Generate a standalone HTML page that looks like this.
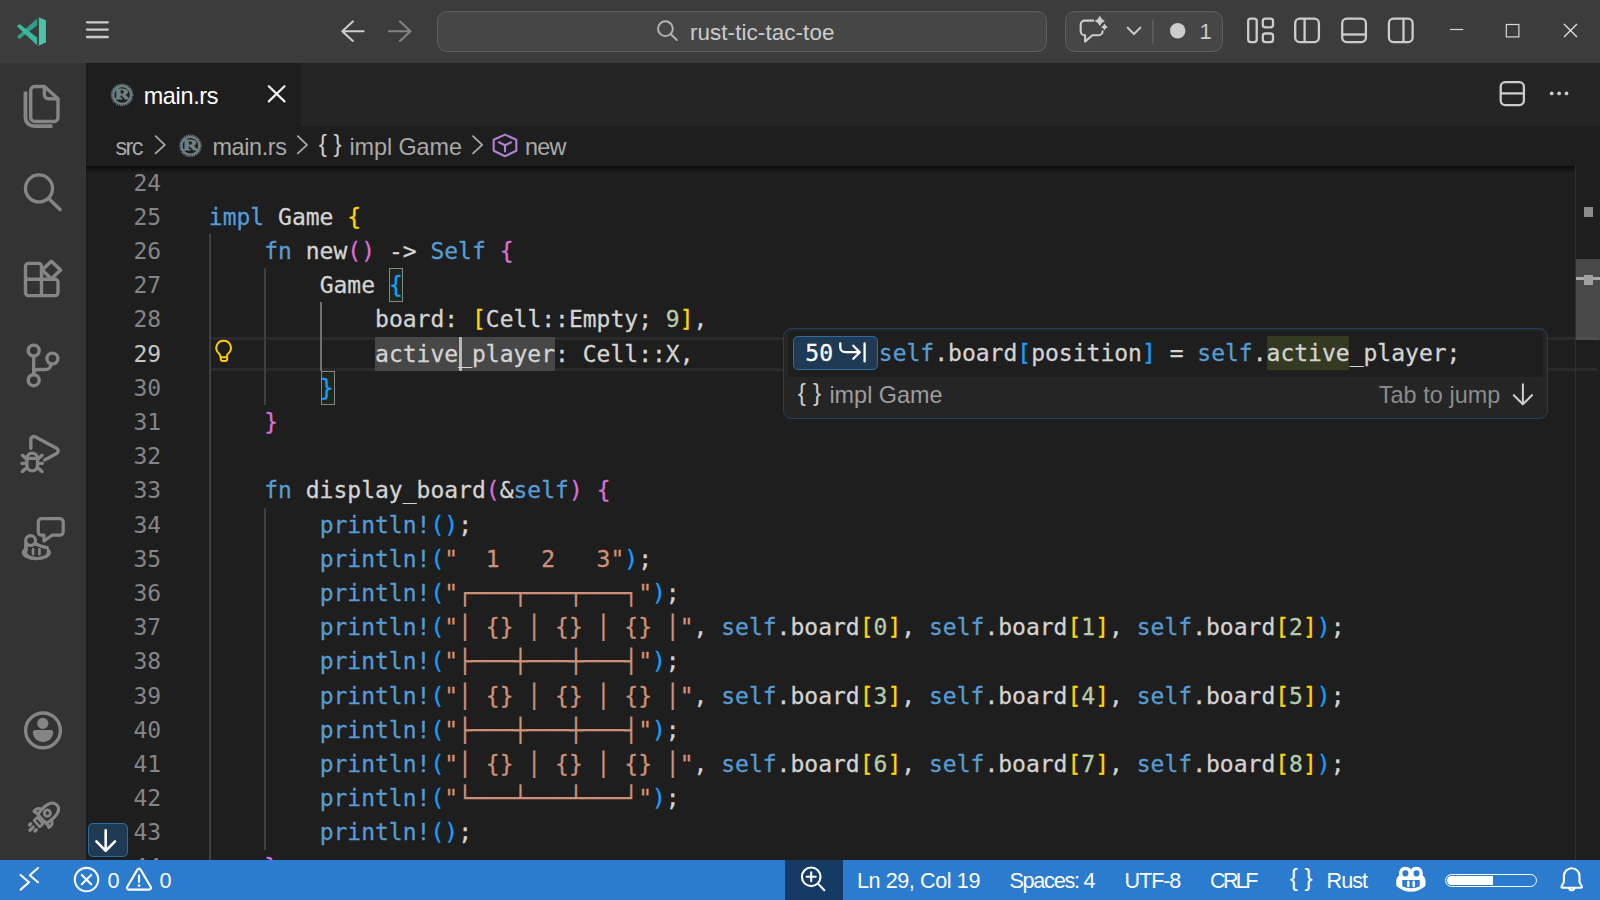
<!DOCTYPE html>
<html lang="en"><head><meta charset="utf-8"><title>main.rs - rust-tic-tac-toe - Visual Studio Code - Insiders</title>
<style>
*{box-sizing:border-box}
html,body{margin:0;padding:0;width:1600px;height:900px;overflow:hidden;background:#1e1e1e}
body{position:relative;font-family:"Liberation Sans", sans-serif;color:#ccc}
.abs,.t,.ln,.cl,.g{position:absolute}
.t{white-space:pre;line-height:1;}
#title{left:0;top:0;width:1600px;height:63px;background:#3c3c3c}
#act{left:0;top:63px;width:86px;height:797px;background:#333}
#tabs{left:86px;top:63px;width:1514px;height:63px;background:#252526}
#tab{left:86px;top:63px;width:215px;height:63px;background:#1e1e1e}
#bc{left:86px;top:126px;width:1514px;height:40px;background:#1e1e1e}
#ed{left:86px;top:166px;width:1514px;height:694px;background:#1e1e1e;overflow:hidden}
#shadow{left:86px;top:166px;width:1490px;height:7px;background:linear-gradient(rgba(0,0,0,.62),rgba(0,0,0,0))}
#status{left:0;top:860px;width:1600px;height:40px;background:#2b7bce}
.ln,.cl{font-family:"DejaVu Sans Mono", "Liberation Mono", monospace;font-size:23.013px;line-height:34.2px;height:34.2px;white-space:pre;}
.ln{left:100px;width:61.2px;text-align:right;color:#858585}
.cl{left:208.8px;color:#d4d4d4;-webkit-text-stroke:0.28px}
.kw{color:#569cd6}.tx{color:#d4d4d4}.b1{color:#ffd700}.b2{color:#da70d6}.b3{color:#179fff}.st{color:#ce9178}.nu{color:#b5cea8}
.g{width:2px;background:#404040}
.bm{outline:1px solid #888;outline-offset:-1px;background:#1d281d}
svg{position:absolute;left:0;top:0;overflow:visible}
</style></head><body>

<div id="title" class="abs"></div><div id="act" class="abs"></div><div id="tabs" class="abs"></div><div id="tab" class="abs"></div><div id="bc" class="abs"></div><div id="ed" class="abs"></div>
<div class="abs" style="left:208.8px;top:336.9px;width:1388.2px;height:2.7px;background:#2a2a2a"></div>
<div class="abs" style="left:208.8px;top:368.2px;width:1388.2px;height:2.7px;background:#2a2a2a"></div>
<div class="abs" style="left:375.1px;top:336.9px;width:180.1px;height:34px;background:#474747"></div>
<div class="g" style="left:209px;top:234.0px;height:649.8px;background:#404040"></div>
<div class="g" style="left:264px;top:268.2px;height:136.8px;background:#404040"></div>
<div class="g" style="left:320px;top:302.4px;height:68.4px;background:#707070"></div>
<div class="g" style="left:264px;top:507.6px;height:342.0px;background:#404040"></div>
<div class="abs bm" style="left:388.9px;top:268.1px;width:14.4px;height:34px"></div>
<div class="abs bm" style="left:320.7px;top:370.9px;width:14.3px;height:34px"></div>
<div class="abs" style="left:459px;top:336.9px;width:3.1px;height:34px;background:#b8b8b8"></div>
<div class="ln" style="top:165.6px;color:#858585">24</div>
<div class="ln" style="top:199.8px;color:#858585">25</div>
<div class="cl" style="top:199.8px;left:208.80px"><span class="kw">impl</span><span class="tx"> Game </span><span class="b1">{</span></div>
<div class="ln" style="top:234.0px;color:#858585">26</div>
<div class="cl" style="top:234.0px;left:264.22px"><span class="kw">fn</span><span class="tx"> new</span><span class="b2">(</span><span class="b2">)</span><span class="tx"> -&gt; </span><span class="kw">Self</span><span class="tx"> </span><span class="b2">{</span></div>
<div class="ln" style="top:268.2px;color:#858585">27</div>
<div class="cl" style="top:268.2px;left:319.64px"><span class="tx">Game </span><span class="b3">{</span></div>
<div class="ln" style="top:302.4px;color:#858585">28</div>
<div class="cl" style="top:302.4px;left:375.06px"><span class="tx">board: </span><span class="b1">[</span><span class="tx">Cell::Empty; </span><span class="nu">9</span><span class="b1">]</span><span class="tx">,</span></div>
<div class="ln" style="top:336.6px;color:#c6c6c6">29</div>
<div class="cl" style="top:336.6px;left:375.06px"><span class="tx">active_player: Cell::X,</span></div>
<div class="ln" style="top:370.8px;color:#858585">30</div>
<div class="cl" style="top:370.8px;left:319.64px"><span class="b3">}</span></div>
<div class="ln" style="top:405.0px;color:#858585">31</div>
<div class="cl" style="top:405.0px;left:264.22px"><span class="b2">}</span></div>
<div class="ln" style="top:439.2px;color:#858585">32</div>
<div class="ln" style="top:473.4px;color:#858585">33</div>
<div class="cl" style="top:473.4px;left:264.22px"><span class="kw">fn</span><span class="tx"> display_board</span><span class="b2">(</span><span class="tx">&amp;</span><span class="kw">self</span><span class="b2">)</span><span class="tx"> </span><span class="b2">{</span></div>
<div class="ln" style="top:507.6px;color:#858585">34</div>
<div class="cl" style="top:507.6px;left:319.64px"><span class="kw">println!</span><span class="b3">(</span><span class="b3">)</span><span class="tx">;</span></div>
<div class="ln" style="top:541.8px;color:#858585">35</div>
<div class="cl" style="top:541.8px;left:319.64px"><span class="kw">println!</span><span class="b3">(</span><span class="st">&quot;  1   2   3&quot;</span><span class="b3">)</span><span class="tx">;</span></div>
<div class="ln" style="top:576.0px;color:#858585">36</div>
<div class="cl" style="top:576.0px;left:319.64px"><span class="kw">println!</span><span class="b3">(</span><span class="st">&quot;┌───┬───┬───┐&quot;</span><span class="b3">)</span><span class="tx">;</span></div>
<div class="ln" style="top:610.2px;color:#858585">37</div>
<div class="cl" style="top:610.2px;left:319.64px"><span class="kw">println!</span><span class="b3">(</span><span class="st">&quot;│ {} │ {} │ {} │&quot;</span><span class="tx">, </span><span class="kw">self</span><span class="tx">.board</span><span class="b1">[</span><span class="nu">0</span><span class="b1">]</span><span class="tx">, </span><span class="kw">self</span><span class="tx">.board</span><span class="b1">[</span><span class="nu">1</span><span class="b1">]</span><span class="tx">, </span><span class="kw">self</span><span class="tx">.board</span><span class="b1">[</span><span class="nu">2</span><span class="b1">]</span><span class="b3">)</span><span class="tx">;</span></div>
<div class="ln" style="top:644.4px;color:#858585">38</div>
<div class="cl" style="top:644.4px;left:319.64px"><span class="kw">println!</span><span class="b3">(</span><span class="st">&quot;├───┼───┼───┤&quot;</span><span class="b3">)</span><span class="tx">;</span></div>
<div class="ln" style="top:678.6px;color:#858585">39</div>
<div class="cl" style="top:678.6px;left:319.64px"><span class="kw">println!</span><span class="b3">(</span><span class="st">&quot;│ {} │ {} │ {} │&quot;</span><span class="tx">, </span><span class="kw">self</span><span class="tx">.board</span><span class="b1">[</span><span class="nu">3</span><span class="b1">]</span><span class="tx">, </span><span class="kw">self</span><span class="tx">.board</span><span class="b1">[</span><span class="nu">4</span><span class="b1">]</span><span class="tx">, </span><span class="kw">self</span><span class="tx">.board</span><span class="b1">[</span><span class="nu">5</span><span class="b1">]</span><span class="b3">)</span><span class="tx">;</span></div>
<div class="ln" style="top:712.8px;color:#858585">40</div>
<div class="cl" style="top:712.8px;left:319.64px"><span class="kw">println!</span><span class="b3">(</span><span class="st">&quot;├───┼───┼───┤&quot;</span><span class="b3">)</span><span class="tx">;</span></div>
<div class="ln" style="top:747.0px;color:#858585">41</div>
<div class="cl" style="top:747.0px;left:319.64px"><span class="kw">println!</span><span class="b3">(</span><span class="st">&quot;│ {} │ {} │ {} │&quot;</span><span class="tx">, </span><span class="kw">self</span><span class="tx">.board</span><span class="b1">[</span><span class="nu">6</span><span class="b1">]</span><span class="tx">, </span><span class="kw">self</span><span class="tx">.board</span><span class="b1">[</span><span class="nu">7</span><span class="b1">]</span><span class="tx">, </span><span class="kw">self</span><span class="tx">.board</span><span class="b1">[</span><span class="nu">8</span><span class="b1">]</span><span class="b3">)</span><span class="tx">;</span></div>
<div class="ln" style="top:781.2px;color:#858585">42</div>
<div class="cl" style="top:781.2px;left:319.64px"><span class="kw">println!</span><span class="b3">(</span><span class="st">&quot;└───┴───┴───┘&quot;</span><span class="b3">)</span><span class="tx">;</span></div>
<div class="ln" style="top:815.4px;color:#858585">43</div>
<div class="cl" style="top:815.4px;left:319.64px"><span class="kw">println!</span><span class="b3">(</span><span class="b3">)</span><span class="tx">;</span></div>
<div class="ln" style="top:849.6px;color:#858585">44</div>
<div class="cl" style="top:849.6px;left:264.22px"><span class="b2">}</span></div>
<div id="shadow" class="abs"></div>
<div id="status" class="abs"></div>
<div class="abs" style="left:437px;top:11px;width:610px;height:41px;border-radius:10px;background:#464646;border:1.5px solid #5f5f5f"></div>
<div class="abs" style="left:1065px;top:11px;width:157.5px;height:41px;border-radius:10px;background:#464646;border:1.5px solid #5f5f5f"></div>
<div class="abs" style="left:1575px;top:166px;width:1.4px;height:694px;background:#303030"></div>
<div class="abs" style="left:1576px;top:259px;width:24px;height:81px;background:rgba(135,135,135,.4)"></div>
<div class="abs" style="left:1576px;top:277.200px;width:24px;height:2.800px;background:#a8a8a8"></div>
<div class="abs" style="left:1584px;top:207px;width:8.500px;height:10px;background:#8c8c8c"></div>
<div class="abs" style="left:1584px;top:275.200px;width:8.500px;height:10px;background:#a0a0a0"></div>
<div class="abs" style="left:783px;top:328px;width:765px;height:90.500px;border-radius:8.500px;background:#252526;border:1.300px solid #1f4265"></div>
<div class="abs" style="left:788px;top:331.200px;width:755.200px;height:45.400px;background:#1e1e1e;border-radius:4px 4px 0 0"></div>
<div class="abs" style="left:793px;top:336px;width:84.800px;height:34px;border-radius:4.800px;background:#1e3a54;border:1.300px solid #2e6ba3"></div>
<div class="abs" style="left:1266.700px;top:336px;width:82.600px;height:34px;background:#343a22"></div>
<div class="abs" style="left:88px;top:823px;width:40px;height:33.800px;border-radius:5px;background:#1e3a54;border:1.300px solid #2e6ba3"></div>
<div class="abs" style="left:785px;top:860px;width:58px;height:40px;background:#153b64"></div>
<div class="abs" style="left:1445px;top:873.800px;width:92px;height:13px;border-radius:7px;border:1.300px solid #fff"></div>
<div class="abs" style="left:1447.200px;top:875.900px;width:45.800px;height:8.800px;border-radius:4.400px 0 0 4.400px;background:#fff"></div>
<div class="cl" style="top:336.1px;left:878.8px"><span class="kw">self</span><span class="tx">.board</span><span class="b3">[</span><span class="tx">position</span><span class="b3">]</span><span class="tx"> = </span><span class="kw">self</span><span class="tx">.active_player;</span></div>
<div class="cl" style="top:336.1px;left:805.3px;color:#fff">50</div>
<svg width="1600" height="900" viewBox="0 0 1600 900"><polygon points="16.900,36.750 37.100,18.600 37.100,25.600 19.500,39.100" fill="#319f87"/><polygon points="19.500,23.900 37.100,37.600 37.100,45.200 16.900,26.300" fill="#3db89e"/><polygon points="37.600,17.100 39,17.600 45.900,20.300 45.900,42.400 39,45.500 37.600,45.900 38.900,44.800 38.900,18.100" fill="#4ec2a9"/>
<path d="M87 22.3H107.8" stroke="#ccc" stroke-width="2.3" stroke-linecap="round"/>
<path d="M87 29.6H107.8" stroke="#ccc" stroke-width="2.3" stroke-linecap="round"/>
<path d="M87 37.0H107.8" stroke="#ccc" stroke-width="2.3" stroke-linecap="round"/>
<path d="M363.6 31.2H342.5M352.8 21.4L342.3 31.2L352.8 41" fill="none" stroke="#ccc" stroke-width="2.1" stroke-linecap="round" stroke-linejoin="round"/>
<path d="M389 31.2H410M400 21.4L410.5 31.2L400 41" fill="none" stroke="#848484" stroke-width="2.1" stroke-linecap="round" stroke-linejoin="round"/>
<circle cx="665.4" cy="28.7" r="7.4" fill="none" stroke="#b4b4b4" stroke-width="1.9"/><path d="M670.8 34.2L676.8 40" stroke="#b4b4b4" stroke-width="1.9" stroke-linecap="round"/>
<path d="M1093.300 20.600H1084.700a4 4 0 0 0-4 4V31.300a4 4 0 0 0 4 4h.400v6.300l7.200-6.300H1098.600a4 4 0 0 0 4-4V31.600" fill="none" stroke="#ccc" stroke-width="2.100" stroke-linecap="round" stroke-linejoin="round"/>
<path d="M1099.8 15.80Q1101.23 19.47 1104.90 20.9Q1101.23 22.33 1099.8 26.00Q1098.37 22.33 1094.70 20.9Q1098.37 19.47 1099.8 15.80z" fill="#ccc"/>
<path d="M1104.5 23.60Q1105.48 26.12 1108.00 27.1Q1105.48 28.08 1104.5 30.60Q1103.52 28.08 1101.00 27.1Q1103.52 26.12 1104.5 23.60z" fill="#ccc"/>
<path d="M1127.6 27.600L1134 34L1140.400 27.600" fill="none" stroke="#ccc" stroke-width="2" stroke-linecap="round" stroke-linejoin="round"/>
<path d="M1153 19.500V43.500" stroke="#5f5f5f" stroke-width="1.6"/>
<circle cx="1177.700" cy="30.800" r="7.700" fill="#ccc"/>
<rect x="1248.200" y="18.700" width="8.500" height="23.400" rx="2.500" fill="none" stroke="#ccc" stroke-width="2.3"/>
<rect x="1262.800" y="18.700" width="10.200" height="8.600" rx="2.500" fill="none" stroke="#ccc" stroke-width="2.3"/>
<rect x="1262.800" y="33.500" width="10.200" height="8.600" rx="2.500" fill="none" stroke="#ccc" stroke-width="2.3"/>
<rect x="1295.200" y="18.700" width="23.700" height="23.400" rx="4.500" fill="none" stroke="#ccc" stroke-width="2.3"/><path d="M1304.600 18.700V42" fill="none" stroke="#ccc" stroke-width="2.3"/>
<rect x="1342.200" y="18.700" width="23.700" height="23.400" rx="4.500" fill="none" stroke="#ccc" stroke-width="2.3"/><path d="M1342.200 34.500H1366" fill="none" stroke="#ccc" stroke-width="2.3"/>
<rect x="1388.900" y="18.700" width="23.700" height="23.400" rx="4.500" fill="none" stroke="#ccc" stroke-width="2.3"/><path d="M1403.500 18.700V42" fill="none" stroke="#ccc" stroke-width="2.3"/>
<path d="M1450 29.500H1463.300" stroke="#d8d8d8" stroke-width="1.200"/>
<rect x="1506.300" y="24.500" width="12.600" height="12.400" fill="none" stroke="#d8d8d8" stroke-width="1.200"/>
<path d="M1564 24L1577 37M1577 24L1564 37" stroke="#e4e4e4" stroke-width="1.300"/>
<g><circle cx="122.1" cy="94.9" r="10.500" fill="none" stroke="#6d8086" stroke-width="1.700" stroke-dasharray="1.050 0.890"/><circle cx="122.1" cy="94.9" r="8.900" fill="none" stroke="#6d8086" stroke-width="2.300"/><text x="114.80" y="99.00" textLength="14.800" lengthAdjust="spacingAndGlyphs" font-family="Liberation Serif, serif" font-weight="bold" font-size="14.500" fill="#6d8086" stroke="#6d8086" stroke-width="0.800">R</text></g>
<path d="M268.800 86.200L284.500 101.400M284.500 86.200L268.800 101.400" stroke="#f0f0f0" stroke-width="2.200" stroke-linecap="round"/>
<rect x="1500.700" y="82.200" width="23.200" height="22.900" rx="4.500" fill="none" stroke="#ccc" stroke-width="2.300"/><path d="M1500.700 93.400H1524" stroke="#ccc" stroke-width="2.300"/>
<circle cx="1551.7" cy="93.400" r="1.900" fill="#ccc"/>
<circle cx="1559.1" cy="93.400" r="1.900" fill="#ccc"/>
<circle cx="1566.5" cy="93.400" r="1.900" fill="#ccc"/>
<path d="M155.6 136.200L164.79999999999998 144.800L155.6 153.400" fill="none" stroke="#a9a9a9" stroke-width="1.800" stroke-linecap="round" stroke-linejoin="round"/>
<g><circle cx="190.4" cy="145.8" r="10.500" fill="none" stroke="#6d8086" stroke-width="1.700" stroke-dasharray="1.050 0.890"/><circle cx="190.4" cy="145.8" r="8.900" fill="none" stroke="#6d8086" stroke-width="2.300"/><text x="183.10" y="149.90" textLength="14.800" lengthAdjust="spacingAndGlyphs" font-family="Liberation Serif, serif" font-weight="bold" font-size="14.500" fill="#6d8086" stroke="#6d8086" stroke-width="0.800">R</text></g>
<path d="M297.8 136.200L307.0 144.800L297.8 153.400" fill="none" stroke="#a9a9a9" stroke-width="1.800" stroke-linecap="round" stroke-linejoin="round"/>
<path d="M473 136.200L482.2 144.800L473 153.400" fill="none" stroke="#a9a9a9" stroke-width="1.800" stroke-linecap="round" stroke-linejoin="round"/>
<path d="M505 134.600L516.300 139.800V150.800L505 156.200L493.700 150.800V139.800ZM499 142.300L505 145.300L511 142.300M505 145.300V151.500" fill="none" stroke="#b180d7" stroke-width="2.100" stroke-linejoin="round" stroke-linecap="round"/>
<path d="M223.600 340.700a7.200 7.200 0 0 0-4.700 12.700c1 .9 1.500 1.900 1.500 3v.800h6.400v-.800c0-1.100.5-2.100 1.500-3a7.200 7.200 0 0 0-4.700-12.700zM220.800 357.200v2a1.800 1.800 0 0 0 1.800 1.800h2.800a1.800 1.800 0 0 0 1.800-1.800v-2" fill="none" stroke="#ffcc00" stroke-width="2" stroke-linejoin="round"/>
<path d="M840.300 343.300v3.900a5 5 0 0 0 5 5h14M853.300 345.700l6.500 6.500l-6.500 6.500M864.600 343.400v18" fill="none" stroke="#fff" stroke-width="2.300" stroke-linecap="round" stroke-linejoin="round"/>
<path d="M1522.900 384.200V404M1513.800 395.200L1522.900 404.300L1532 395.200" fill="none" stroke="#ccc" stroke-width="2.100" stroke-linecap="round" stroke-linejoin="round"/>
<path d="M105.700 830.200V850.600M96.400 841.400L105.700 850.900L115 841.400" fill="none" stroke="#fff" stroke-width="2.600" stroke-linecap="round" stroke-linejoin="round"/>
<path d="M44.400 86.500H34.700a4 4 0 0 0-4 4v27a4 4 0 0 0 4 4H54a4 4 0 0 0 4-4V98.800zL58 98.800M44.400 86.500V94.800a4 4 0 0 0 4 4H58" fill="none" stroke="#858585" stroke-width="3.400" stroke-linecap="round" stroke-linejoin="round"/>
<path d="M25.500 91.500V117.500a8.600 8.600 0 0 0 8.600 8.600H52.500" fill="none" stroke="#858585" stroke-width="3.900" stroke-linecap="butt" stroke-linejoin="round"/>
<circle cx="39" cy="188.400" r="13.500" fill="none" stroke="#858585" stroke-width="3.400" stroke-linecap="round" stroke-linejoin="round"/><path d="M49 198.700L60 209.500" fill="none" stroke="#858585" stroke-width="3.400" stroke-linecap="round" stroke-linejoin="round"/>
<path d="M41.500 279.200V266.400a3 3 0 0 0-3-3H28.500a3 3 0 0 0-3 3V292.600a3 3 0 0 0 3 3H55a3 3 0 0 0 3-3V282.200a3 3 0 0 0-3-3H25.500M41.500 279.200V295.600" fill="none" stroke="#858585" stroke-width="3.400" stroke-linecap="round" stroke-linejoin="round"/>
<path d="M51.400 261.200l9.200 8.800l-9.200 8.800l-9.200-8.800z" fill="none" stroke="#858585" stroke-width="3.400" stroke-linecap="round" stroke-linejoin="round"/>
<circle cx="33.700" cy="350.600" r="5.500" fill="none" stroke="#858585" stroke-width="3.400" stroke-linecap="round" stroke-linejoin="round"/><circle cx="52.400" cy="358.600" r="5.500" fill="none" stroke="#858585" stroke-width="3.400" stroke-linecap="round" stroke-linejoin="round"/><circle cx="33.700" cy="380.200" r="5.500" fill="none" stroke="#858585" stroke-width="3.400" stroke-linecap="round" stroke-linejoin="round"/>
<path d="M33.700 356.200V374.500M33.700 373.500a4 4 0 0 1 4-4H45.500a5.500 5.500 0 0 0 5.500-5.300" fill="none" stroke="#858585" stroke-width="3.400" stroke-linecap="round" stroke-linejoin="round"/>
<path d="M30.800 448.300V439.500a3 3 0 0 1 4.300-2.700L56.600 448.200a3 3 0 0 1 0 5.300L44.600 460" fill="none" stroke="#858585" stroke-width="3.400" stroke-linecap="round" stroke-linejoin="round"/>
<path d="M26.900 458.400a5.300 5.300 0 0 1 10.600 0V465.600a5.300 5.300 0 0 1-10.600 0zM26.900 458.300H37.500M22.400 455.300L26.200 458.800M42 455.300L38.200 458.800M21.900 463.300H26.500M42.500 463.300H38M22.400 471.600L26.500 468M42 471.600L38 468" fill="none" stroke="#858585" stroke-width="3.300" stroke-linecap="round" stroke-linejoin="round"/>
<path d="M41.500 518.600H60a3.200 3.200 0 0 1 3.200 3.200V532a3.200 3.200 0 0 1-3.200 3.200H52L44 541V535.200H41.500A3.200 3.200 0 0 1 38.300 532V521.800A3.200 3.200 0 0 1 41.500 518.600z" fill="none" stroke="#858585" stroke-width="3.200" stroke-linecap="round" stroke-linejoin="round"/>
<ellipse cx="36.300" cy="552.600" rx="14.600" ry="7.700" fill="#858585"/>
<path d="M27.300 545.500H46.800V553a9.800 4.400 0 0 1-19.500 0z" fill="#333"/>
<path d="M24.100 541.500V551H27.800V545z" fill="#858585"/>
<path d="M34 541.500C37 546.500 43 546.200 48.500 548.200" fill="none" stroke="#858585" stroke-width="3.400"/>
<circle cx="30.600" cy="540.600" r="4.900" fill="#333" stroke="#858585" stroke-width="3.200"/>
<path d="M33.100 549.400V554.200M39.400 549.400V554.200" stroke="#858585" stroke-width="2.700" stroke-linecap="round"/>
<circle cx="43" cy="730.400" r="17.400" fill="none" stroke="#858585" stroke-width="3.400" stroke-linecap="round" stroke-linejoin="round"/><circle cx="42.800" cy="723.400" r="5.600" fill="#858585"/>
<path d="M35 730H51a2.200 2.200 0 0 1 2.200 2.200a10.200 10 0 0 1-20.400 0A2.200 2.200 0 0 1 35 730z" fill="#858585"/>
<g transform="translate(49.500,811.900) rotate(47)"><path d="M-6 10.300C-7.600 5 -8.200 -4 -4.500 -8.300C-2.500 -10.700 2.500 -10.700 4.500 -8.300C8.200 -4 7.600 5 6 10.300z" fill="none" stroke="#858585" stroke-width="3.100" stroke-linecap="round" stroke-linejoin="round"/><circle cx="-0.600" cy="2.400" r="3.100" fill="none" stroke="#858585" stroke-width="2.900"/><path d="M-7.200 4C-10.500 5 -11.800 8 -11 11L-6.500 9.800M7.200 4C10.500 5 11.800 8 11 11L6.500 9.800" fill="none" stroke="#858585" stroke-width="3.100" stroke-linecap="round" stroke-linejoin="round"/><rect x="-4.300" y="12.800" width="8.600" height="4.400" fill="none" stroke="#858585" stroke-width="2.600" stroke-linejoin="round"/><path d="M-4.100 21.800V23.600M0 22.300V26.800M4.100 21.800V23.600" fill="none" stroke="#858585" stroke-width="3.300" stroke-linecap="round"/></g>
<path d="M20.600 875L29 882.300L20.600 889.600M38 868L29.800 875.200L38 882.300" fill="none" stroke="#ffffff" stroke-width="2.100" stroke-linecap="round" stroke-linejoin="round"/>
<circle cx="86.500" cy="879.600" r="11.700" fill="none" stroke="#ffffff" stroke-width="2.100" stroke-linecap="round" stroke-linejoin="round"/><path d="M81.800 874.900L91.200 884.300M91.200 874.900L81.800 884.300" fill="none" stroke="#ffffff" stroke-width="2.100" stroke-linecap="round" stroke-linejoin="round"/>
<path d="M139 868.600a1.800 1.800 0 0 1 1.600 1L150.800 887a1.800 1.800 0 0 1-1.600 2.600H128.800a1.800 1.800 0 0 1-1.600-2.600L137.400 869.600a1.800 1.800 0 0 1 1.600-1zM139 875.500V882" fill="none" stroke="#ffffff" stroke-width="2.100" stroke-linecap="round" stroke-linejoin="round"/><circle cx="139" cy="885.600" r="1.400" fill="#ffffff"/>
<circle cx="811.200" cy="876.800" r="9.300" fill="none" stroke="#ffffff" stroke-width="2.100" stroke-linecap="round" stroke-linejoin="round"/><path d="M818 883.600L824.300 890.200M806.700 876.800H815.700M811.200 872.300V881.300" fill="none" stroke="#ffffff" stroke-width="2.100" stroke-linecap="round" stroke-linejoin="round"/>
<path d="M1396.300 881c0-2.800 1.200-4.300 2.700-5.200c-.5-5 1.500-9 6.300-9c2.600 0 4.500 1 5.600 2.600c1.100-1.600 3-2.600 5.600-2.600c4.800 0 6.800 4 6.300 9c1.500.9 2.700 2.400 2.700 5.200v3.400c0 1-.5 1.900-1.300 2.500c-3.600 2.600-8.300 4.900-13.300 4.900s-9.700-2.300-13.300-4.900c-.8-.6-1.300-1.500-1.300-2.500z" fill="#ffffff"/>
<rect x="1402.500" y="870.200" width="5.800" height="6.200" rx="2.600" fill="#2b7bce"/><rect x="1413.600" y="870.200" width="5.800" height="6.200" rx="2.600" fill="#2b7bce"/>
<path d="M1402.300 880h17.400v6.200c-2.500 1.300-5.600 2-8.700 2s-6.200-.7-8.700-2z" fill="#2b7bce"/>
<path d="M1408.300 881.800V886M1413.700 881.800V886" stroke="#ffffff" stroke-width="2.400" stroke-linecap="round"/>
<path d="M1571.700 868.200a7.800 7.800 0 0 0-7.800 7.800v6l-2.300 4.200a1 1 0 0 0 .900 1.500h18.400a1 1 0 0 0 .900-1.500l-2.300-4.200v-6a7.800 7.800 0 0 0-7.800-7.800zM1569 888.200a2.800 2.800 0 0 0 5.400 0" fill="none" stroke="#ffffff" stroke-width="2.100" stroke-linecap="round" stroke-linejoin="round"/></svg>
<div class="t" style="left:689.90px;top:22.14px;font-size:22.4px;color:#cccccc;letter-spacing:0.098px;font-family:'Liberation Sans', sans-serif;">rust-tic-tac-toe</div>
<div class="t" style="left:1199.50px;top:21.18px;font-size:22px;color:#cccccc;letter-spacing:0.000px;font-family:'Liberation Sans', sans-serif;">1</div>
<div class="t" style="left:143.70px;top:84.89px;font-size:23.4px;color:#ffffff;letter-spacing:-0.314px;font-family:'Liberation Sans', sans-serif;">main.rs</div>
<div class="t" style="left:115.60px;top:135.79px;font-size:23.4px;color:#a9a9a9;letter-spacing:-1.692px;font-family:'Liberation Sans', sans-serif;">src</div>
<div class="t" style="left:212.50px;top:135.79px;font-size:23.4px;color:#a9a9a9;letter-spacing:-0.373px;font-family:'Liberation Sans', sans-serif;">main.rs</div>
<div class="t" style="left:318.80px;top:131.85px;font-size:24.4px;color:#cccccc;letter-spacing:-0.111px;font-family:'Liberation Sans', sans-serif;">{ }</div>
<div class="t" style="left:349.40px;top:135.79px;font-size:23.4px;color:#a9a9a9;letter-spacing:-0.059px;font-family:'Liberation Sans', sans-serif;">impl Game</div>
<div class="t" style="left:525.00px;top:135.79px;font-size:23.4px;color:#a9a9a9;letter-spacing:-0.809px;font-family:'Liberation Sans', sans-serif;">new</div>
<div class="t" style="left:797.80px;top:380.85px;font-size:24.4px;color:#cccccc;letter-spacing:0.139px;font-family:'Liberation Sans', sans-serif;">{ }</div>
<div class="t" style="left:829.40px;top:384.39px;font-size:23.4px;color:#9d9d9d;letter-spacing:0.016px;font-family:'Liberation Sans', sans-serif;">impl Game</div>
<div class="t" style="left:1378.75px;top:384.39px;font-size:23.4px;color:#8c8c8c;letter-spacing:0.059px;font-family:'Liberation Sans', sans-serif;">Tab to jump</div>
<div class="t" style="left:107.40px;top:869.82px;font-size:21.6px;color:#ffffff;letter-spacing:0.000px;font-family:'Liberation Sans', sans-serif;">0</div>
<div class="t" style="left:159.40px;top:869.82px;font-size:21.6px;color:#ffffff;letter-spacing:0.000px;font-family:'Liberation Sans', sans-serif;">0</div>
<div class="t" style="left:856.90px;top:870.32px;font-size:21.6px;color:#ffffff;letter-spacing:-0.412px;font-family:'Liberation Sans', sans-serif;">Ln 29, Col 19</div>
<div class="t" style="left:1009.40px;top:870.32px;font-size:21.6px;color:#ffffff;letter-spacing:-1.240px;font-family:'Liberation Sans', sans-serif;">Spaces: 4</div>
<div class="t" style="left:1124.60px;top:870.32px;font-size:21.6px;color:#ffffff;letter-spacing:-1.116px;font-family:'Liberation Sans', sans-serif;">UTF-8</div>
<div class="t" style="left:1210.00px;top:870.32px;font-size:21.6px;color:#ffffff;letter-spacing:-2.666px;font-family:'Liberation Sans', sans-serif;">CRLF</div>
<div class="t" style="left:1289.70px;top:865.75px;font-size:24.4px;color:#ffffff;letter-spacing:-0.061px;font-family:'Liberation Sans', sans-serif;">{ }</div>
<div class="t" style="left:1326.50px;top:870.32px;font-size:21.6px;color:#ffffff;letter-spacing:-0.967px;font-family:'Liberation Sans', sans-serif;">Rust</div>
</body></html>
